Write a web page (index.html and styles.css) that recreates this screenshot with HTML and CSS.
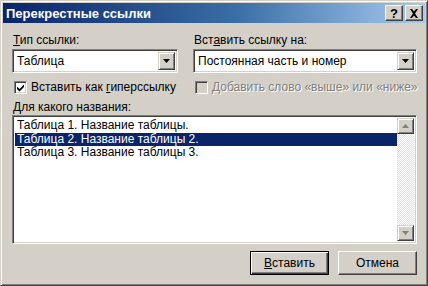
FILE: index.html
```html
<!DOCTYPE html>
<html lang="ru">
<head>
<meta charset="utf-8">
<title>Перекрестные ссылки</title>
<link rel="stylesheet" href="styles.css">
</head>
<body>
<div class="window">
  <div class="titlebar">
    <span class="title">Перекрестные ссылки</span>
    <div class="tbtns">
      <span class="tbtn help">?</span>
      <span class="tbtn close">
        <svg width="10" height="9" viewBox="0 0 10 9"><path d="M1 0h2l2 2.5L7 0h2L6 4.5 9 9H7L5 6.5 3 9H1l3-4.5z" fill="#000"/></svg>
      </span>
    </div>
  </div>
  <div class="content">
    <div class="cols">
      <div class="col left">
        <div class="label"><u>Т</u>ип ссылки:</div>
        <div class="combo">
          <span class="combo-text">Таблица</span>
          <span class="dd"><svg width="7" height="4" viewBox="0 0 7 4"><path d="M0 0h7L3.5 4z" fill="#000"/></svg></span>
        </div>
        <label class="check">
          <span class="box"><svg width="9" height="9" viewBox="0 0 9 9"><path d="M1 3.5l2.5 2.5L8 1.5v2.5L3.5 8.5 1 6z" fill="#000"/></svg></span>
          <span class="check-text">Вставить как <u>г</u>иперссылку</span>
        </label>
      </div>
      <div class="col right">
        <div class="label">Вст<u>а</u>вить ссылку на:</div>
        <div class="combo">
          <span class="combo-text">Постоянная часть и номер</span>
          <span class="dd"><svg width="7" height="4" viewBox="0 0 7 4"><path d="M0 0h7L3.5 4z" fill="#000"/></svg></span>
        </div>
        <label class="check disabled">
          <span class="box"></span>
          <span class="check-text">Добавить слово «выше» или «ниже»</span>
        </label>
      </div>
    </div>
    <div class="label list-label"><u>Д</u>ля какого названия:</div>
    <div class="listbox">
      <div class="items">
        <div class="item">Таблица 1. Название таблицы.</div>
        <div class="item selected">Таблица 2. Название таблицы 2.</div>
        <div class="item">Таблица 3. Название таблицы 3.</div>
      </div>
      <div class="scrollbar">
        <span class="sbtn"><svg width="7" height="4" viewBox="0 0 7 4"><path d="M0 4h7L3.5 0z" fill="#808080"/></svg></span>
        <span class="track"></span>
        <span class="sbtn"><svg width="7" height="4" viewBox="0 0 7 4"><path d="M0 0h7L3.5 4z" fill="#808080"/></svg></span>
      </div>
    </div>
    <div class="actions">
      <button class="btn default"><u>В</u>ставить</button>
      <button class="btn">Отмена</button>
    </div>
  </div>
</div>
</body>
</html>
```
FILE: styles.css
```css
* { box-sizing: border-box; }
html, body { margin: 0; padding: 0; background: #d4d0c8; }
body { font-family: "Liberation Sans", Arial, sans-serif; font-size: 12px; color: #000; }

.window {
  width: 428px;
  height: 286px;
  background: #d4d0c8;
  border-top: 1px solid #d4d0c8;
  border-left: 1px solid #d4d0c8;
  border-right: 1px solid #404040;
  border-bottom: 1px solid #404040;
  box-shadow: inset 1px 1px 0 #fff, inset -1px -1px 0 #808080;
  padding: 2px;
  display: flex;
  flex-direction: column;
}

.titlebar {
  height: 20px;
  background: linear-gradient(to right, #0a246a 0%, #3a6ea5 55%, #a6caf0 100%);
  display: flex;
  align-items: center;
  justify-content: space-between;
  padding: 0 2px 0 3px;
}
.title { color: #fff; font-weight: bold; font-size: 13px; }
.tbtns { display: flex; gap: 2px; }
.tbtn {
  width: 18px; height: 16px;
  background: #d4d0c8;
  border-top: 1px solid #fff; border-left: 1px solid #fff;
  border-right: 1px solid #404040; border-bottom: 1px solid #404040;
  box-shadow: inset -1px -1px 0 #808080;
  display: flex; align-items: center; justify-content: center;
  font-weight: bold; font-size: 13px; line-height: 1;
}

.content { padding: 10px 8px 0 9px; display: flex; flex-direction: column; flex: 1; }

.cols { display: flex; gap: 15px; }
.col { display: flex; flex-direction: column; }
.col.left { width: 166px; }
.col.right { width: 224px; }
.label { height: 15px; line-height: 15px; margin-left: 1px; white-space: nowrap; }

.combo {
  height: 24px;
  background: #fff;
  border-top: 1px solid #808080; border-left: 1px solid #808080;
  border-right: 1px solid #fff; border-bottom: 1px solid #fff;
  box-shadow: inset 1px 1px 0 #404040, inset -1px -1px 0 #d4d0c8;
  display: flex; align-items: center;
  padding: 2px;
  margin-top: 1px;
}
.combo-text { flex: 1; padding-left: 2px; white-space: nowrap; }
.dd {
  width: 17px; height: 18px;
  background: #d4d0c8;
  border-top: 1px solid #d4d0c8; border-left: 1px solid #d4d0c8;
  border-right: 1px solid #404040; border-bottom: 1px solid #404040;
  box-shadow: inset 1px 1px 0 #fff, inset -1px -1px 0 #808080;
  display: flex; align-items: center; justify-content: center;
}

.check { display: flex; align-items: center; gap: 4px; margin-top: 7px; height: 14px; margin-left: 2px; }
.check-text { white-space: nowrap; }
.box {
  flex: none;
  width: 13px; height: 13px; background: #fff;
  border-top: 1px solid #808080; border-left: 1px solid #808080;
  border-right: 1px solid #fff; border-bottom: 1px solid #fff;
  box-shadow: inset 1px 1px 0 #404040, inset -1px -1px 0 #d4d0c8;
  display: flex; align-items: center; justify-content: center;
}
.check.disabled { color: #808080; text-shadow: 1px 1px 0 #fff; }
.check.disabled .box { background: #d4d0c8; }

.list-label { margin-top: 6px; }
.listbox {
  height: 129px;
  background: #fff;
  border-top: 1px solid #808080; border-left: 1px solid #808080;
  border-right: 1px solid #fff; border-bottom: 1px solid #fff;
  box-shadow: inset 1px 1px 0 #404040, inset -1px -1px 0 #d4d0c8;
  display: flex;
  padding: 2px;
}
.items { flex: 1; padding-top: 1px; }
.item { height: 13.5px; line-height: 13px; padding-left: 2px; white-space: nowrap; }
.item.selected { background: #0a246a; color: #fff; }

.scrollbar {
  width: 17px;
  display: flex; flex-direction: column;
  background-color: #f0eee9;
  background-image: repeating-conic-gradient(#fff 0 25%, #e4e1db 0 50%);
  background-size: 2px 2px;
}
.sbtn {
  height: 16px;
  background: #d4d0c8;
  border-top: 1px solid #d4d0c8; border-left: 1px solid #d4d0c8;
  border-right: 1px solid #404040; border-bottom: 1px solid #404040;
  box-shadow: inset 1px 1px 0 #fff, inset -1px -1px 0 #808080;
  display: flex; align-items: center; justify-content: center;
}
.track { flex: 1; }

.actions { display: flex; justify-content: flex-end; gap: 9px; margin-top: 7px; }
.btn {
  width: 79px; height: 24px;
  font-family: inherit; font-size: 12px; color: #000;
  background: #d4d0c8;
  border-top: 1px solid #fff; border-left: 1px solid #fff;
  border-right: 1px solid #404040; border-bottom: 1px solid #404040;
  box-shadow: inset -1px -1px 0 #808080;
  padding: 0;
}
.btn.default {
  border: 1px solid #000;
  box-shadow: inset 1px 1px 0 #fff, inset -1px -1px 0 #404040, inset -2px -2px 0 #808080;
}
```
